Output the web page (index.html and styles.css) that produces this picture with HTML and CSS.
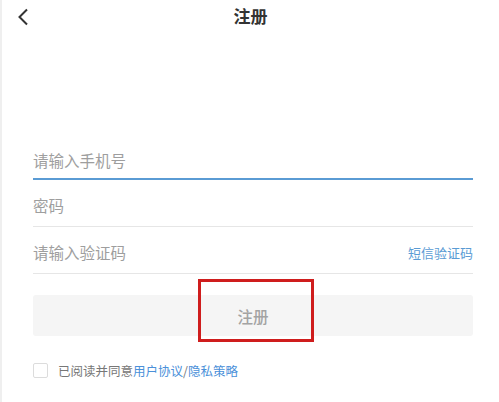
FILE: index.html
```html
<!DOCTYPE html>
<html lang="zh">
<head>
<meta charset="utf-8">
<link rel="stylesheet" href="styles.css">
</head>
<body>
<div class="page">
  <header class="topbar">
    <span class="back">
      <svg width="14" height="18" viewBox="0 0 14 18"><polyline points="11,1.5 3.5,9 11,16.5" fill="none" stroke="#333" stroke-width="2"/></svg>
    </span>
    <h1 class="title">注册</h1>
    <span></span>
  </header>
  <main class="form">
    <div class="field active"><span class="ph">请输入手机号</span></div>
    <div class="field"><span class="ph">密码</span></div>
    <div class="field"><span class="ph">请输入验证码</span><span class="sms">短信验证码</span></div>
    <div class="btn-wrap">
      <div class="btn">注册</div>
      <div class="highlight"></div>
    </div>
    <div class="agree">
      <span class="box"></span>
      <span class="agree-text">已阅读并同意<a class="link">用户协议</a>/<a class="link">隐私策略</a></span>
    </div>
  </main>
</div>
</body>
</html>
```
FILE: styles.css
```css
* { box-sizing: border-box; }
html, body { margin: 0; padding: 0; background: #fff; }
body { font-family: "Noto Sans CJK SC", "Noto Sans", sans-serif; }
.page {
  width: 499px;
  height: 402px;
  border-left: 2px solid #efefef;
  position: relative;
}
.topbar {
  display: grid;
  grid-template-columns: 40px 1fr 40px;
  align-items: center;
  height: 32px;
}
.back { display: flex; align-items: center; padding-left: 14px; padding-top: 1px; }
.title {
  margin: 0;
  text-align: center;
  font-size: 17px;
  font-weight: 700;
  color: #333;
  line-height: 32px;
}
.form { padding: 100px 26px 0 31px; }
.field {
  height: 47px;
  border-bottom: 1px solid #e6e6e6;
  display: flex;
  align-items: center;
  justify-content: space-between;
  padding-top: 4px;
}
.field.active { border-bottom: 2px solid #5a9bd4; height: 48px; padding-top: 9px; }
.ph { font-size: 15.5px; color: #9e9e9e; }
.sms { font-size: 13px; color: #5a9bd4; }
.btn-wrap { position: relative; margin-top: 21px; }
.btn {
  height: 41px;
  background: #f5f5f5;
  border-radius: 3px;
  display: flex;
  align-items: center;
  justify-content: center;
  font-size: 15.5px;
  color: #a3a3a3;
  font-weight: 500;
}
.highlight {
  position: absolute;
  left: 165px;
  top: -16px;
  width: 116px;
  height: 63px;
  border: 3px solid #cf1d1d;
}
.agree {
  display: flex;
  align-items: center;
  margin-top: 25px;
}
.box {
  width: 15px;
  height: 15px;
  border: 1px solid #dcdcdc;
  border-radius: 2px;
  margin-right: 10px;
}
.agree-text { font-size: 12.5px; color: #777; }
.link { color: #4a90d9; }
```
